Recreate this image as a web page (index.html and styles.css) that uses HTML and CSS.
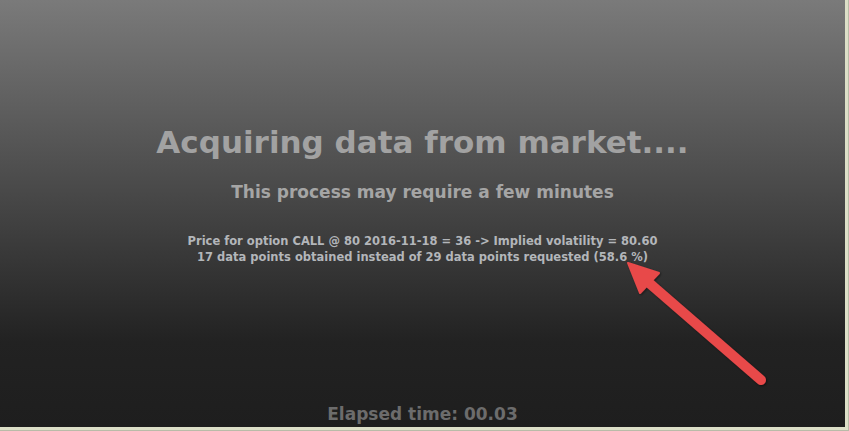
FILE: index.html
```html
<!DOCTYPE html>
<html lang="en">
<head>
    <meta charset="UTF-8">
    <title>Acquiring data</title>
    <link rel="stylesheet" href="styles.css">
</head>
<body>

    <!-- LOADING PANEL -->
    <div class="panel">
        <div class="message">
            <h1 class="title">Acquiring data from market....</h1>
            <h2 class="subtitle">This process may require a few minutes</h2>
            <p class="status">Price for option CALL @ 80 2016-11-18 = 36 -&gt; Implied volatility = 80.60<br>17 data points obtained instead of 29 data points requested (58.6 %)</p>
        </div>
        <div class="elapsed">Elapsed time: 00.03</div>

        <!-- annotation arrow -->
        <svg class="arrow" width="849" height="431" viewBox="0 0 849 431">
            <defs>
                <filter id="sh" x="-20%" y="-20%" width="140%" height="140%">
                    <feDropShadow dx="1" dy="1" stdDeviation="1.2" flood-color="#000" flood-opacity="0.5"/>
                </filter>
            </defs>
            <g filter="url(#sh)" fill="#e8494a" stroke="#e8494a">
                <line x1="761" y1="380" x2="648" y2="282" stroke-width="10" stroke-linecap="round"/>
                <polygon points="628,263 659,273 640,293" stroke-width="2" stroke-linejoin="round"/>
            </g>
        </svg>
    </div>

</body>
</html>
```

FILE: styles.css
```css
* {
    margin: 0;
    padding: 0;
    box-sizing: border-box;
}

body {
    background-color: #b9bba8;
    width: 849px;
    height: 431px;
    overflow: hidden;
    font-family: "DejaVu Sans", Verdana, sans-serif;
}

/* main panel with the grey gradient */
.panel {
    position: relative;
    width: 848px;
    height: 430px;
    background: linear-gradient(#7a7a7a 0%, #4e4e4e 40%, #222222 80%, #1e1e1e 100%);
    border-right: 3px solid #dde0c8;
    border-bottom: 3px solid #dde0c8;
    display: flex;
    flex-direction: column;
    align-items: center;
}

.message {
    padding-top: 124px;
    display: flex;
    flex-direction: column;
    align-items: center;
    text-align: center;
    flex: 1;
}

.title {
    font-size: 31px;
    font-weight: bold;
    color: #a2a2a2;
}

.subtitle {
    margin-top: 22px;
    font-size: 17px;
    font-weight: bold;
    color: #a5a5a5;
}

.status {
    margin-top: 31px;
    font-size: 11.5px;
    font-weight: bold;
    line-height: 16px;
    color: #b3b6ba;
}

.elapsed {
    padding-bottom: 3px;
    font-size: 17px;
    font-weight: bold;
    color: #6c6c6c;
}

.arrow {
    position: absolute;
    left: 0;
    top: 0;
}
```
